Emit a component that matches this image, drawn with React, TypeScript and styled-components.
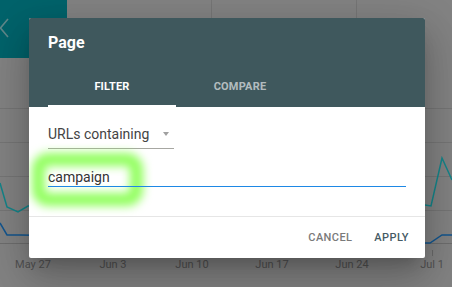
import React from 'react';
import styled, { createGlobalStyle } from 'styled-components';

const GlobalStyle = createGlobalStyle`
   html, body {
      margin: 0;
      padding: 0;
      background: #838383;
   }
   * {
      box-sizing: border-box;
   }
`;

const labels = [
   { x: 33, text: 'May 27' },
   { x: 113, text: 'Jun 3' },
   { x: 192, text: 'Jun 10' },
   { x: 272, text: 'Jun 17' },
   { x: 352, text: 'Jun 24' },
   { x: 432, text: 'Jul 1' },
];

const Chart = () => (
   <ChartSvg width="452" height="287" viewBox="0 0 452 287">
      <g stroke="#767676" strokeWidth="1">
         <line x1="211.5" y1="0" x2="211.5" y2="243" />
         <line x1="356.5" y1="0" x2="356.5" y2="243" />
         <line x1="0" y1="108.5" x2="452" y2="108.5" />
         <line x1="0" y1="142.5" x2="452" y2="142.5" />
         <line x1="0" y1="176.5" x2="452" y2="176.5" />
         <line x1="0" y1="210.5" x2="452" y2="210.5" />
         <line x1="0" y1="243.5" x2="452" y2="243.5" stroke="#6e6e6e" />
         <line x1="432.5" y1="250" x2="432.5" y2="256" stroke="#6a6a6a" />
      </g>
      <polyline
         points="0,183 7,207 18,212 28,206 200,200 425,205 431,206 442,158 452,180"
         fill="none"
         stroke="#14858a"
         strokeWidth="1.5"
      />
      <polyline
         points="0,223 7,235 20,235 200,238 425,243 430,243 442,235 452,235"
         fill="none"
         stroke="#13568f"
         strokeWidth="1.5"
      />
      {labels.map((l) => (
         <AxisLabel key={l.text} x={l.x} y={268} textAnchor="middle">
            {l.text}
         </AxisLabel>
      ))}
   </ChartSvg>
);

export default function App() {
   return (
      <Page>
         <GlobalStyle />
         <Backdrop>
            <Chart />
            <TopBar>
               <BackTab>
                  <svg width="10" height="20" viewBox="0 0 10 20">
                     <polyline points="8,1 0.5,10 8,19" fill="none" stroke="#5f8789" strokeWidth="1.6" />
                  </svg>
               </BackTab>
            </TopBar>
         </Backdrop>

         <Overlay>
            <Dialog>
               <Header>
                  <Title>Page</Title>
                  <Tabs>
                     <Tab $active>FILTER</Tab>
                     <Tab>COMPARE</Tab>
                  </Tabs>
               </Header>

               <Body>
                  <Glow />
                  <Select>
                     <SelectText>URLs containing</SelectText>
                     <Arrow />
                  </Select>
                  <InputField>
                     <TextInput defaultValue="campaign" readOnly />
                  </InputField>
               </Body>

               <Footer>
                  <FlatButton $color="#7a7a7a">CANCEL</FlatButton>
                  <FlatButton $color="#455a64">APPLY</FlatButton>
               </Footer>
            </Dialog>
         </Overlay>
      </Page>
   );
}

const Page = styled.div`
   position: relative;
   width: 452px;
   height: 287px;
   overflow: hidden;
   background: #838383;
   font-family: Roboto, 'Liberation Sans', Arial, sans-serif;
`;

const Backdrop = styled.div`
   position: relative;
   width: 100%;
   height: 100%;
`;

const ChartSvg = styled.svg`
   position: absolute;
   left: 0;
   top: 0;
`;

const AxisLabel = styled.text`
   font-family: Roboto, 'Liberation Sans', Arial, sans-serif;
   font-size: 11px;
   fill: #525252;
`;

const TopBar = styled.div`
   position: relative;
   display: flex;
`;

const BackTab = styled.div`
   width: 67px;
   height: 58px;
   background: #01636b;
   padding-top: 18px;
   display: flex;
   align-items: flex-start;
`;

const Overlay = styled.div`
   position: absolute;
   inset: 0;
   display: flex;
   align-items: flex-start;
   justify-content: flex-start;
   padding: 18px 0 0 29px;
`;

const Dialog = styled.div`
   width: 396px;
   height: 240px;
   background: #ffffff;
   border-radius: 2px;
   overflow: hidden;
   display: flex;
   flex-direction: column;
   box-shadow:
      0 11px 15px -7px rgba(0, 0, 0, 0.2),
      0 24px 38px 3px rgba(0, 0, 0, 0.14),
      0 9px 46px 8px rgba(0, 0, 0, 0.12);
`;

const Header = styled.div`
   background: #3f585d;
   height: 89px;
   padding: 14px 19px 0 19px;
`;

const Title = styled.h2`
   margin: 0;
   font-size: 16px;
   line-height: 21px;
   font-weight: 700;
   color: #ffffff;
`;

const Tabs = styled.div`
   display: flex;
   margin-top: 14px;
   height: 40px;
`;

const Tab = styled.div<{ $active?: boolean }>`
   width: 128px;
   height: 40px;
   display: flex;
   align-items: center;
   justify-content: center;
   font-size: 11px;
   font-weight: 700;
   letter-spacing: 0.2px;
   color: ${(p) => (p.$active ? '#ffffff' : 'rgba(255, 255, 255, 0.62)')};
   border-bottom: 2px solid ${(p) => (p.$active ? '#ffffff' : 'transparent')};
`;

const Body = styled.div`
   position: relative;
   height: 109px;
   padding: 13px 19px 0 19px;
   display: flex;
   flex-direction: column;
`;

const Glow = styled.div`
   position: absolute;
   left: 3px;
   top: 46px;
   width: 111px;
   height: 53px;
   border: 13px solid #90ff5c;
   border-radius: 16px;
   filter: blur(5px);
   pointer-events: none;
`;

const Select = styled.div`
   width: 126px;
   height: 29px;
   display: flex;
   align-items: center;
   justify-content: space-between;
   border-bottom: 1px solid #a7a7a2;
   padding-right: 5px;
`;

const SelectText = styled.span`
   font-size: 14px;
   color: #444444;
`;

const Arrow = styled.span`
   width: 0;
   height: 0;
   border-left: 3.5px solid transparent;
   border-right: 3.5px solid transparent;
   border-top: 4px solid #a0a0a0;
`;

const InputField = styled.div`
   position: relative;
   margin-top: 20px;
   width: 358px;
   height: 18px;
   border-bottom: 1px solid #1e88e5;
   display: flex;
   align-items: flex-start;
`;

const TextInput = styled.input`
   width: 100%;
   height: 16px;
   padding: 0;
   border: none;
   outline: none;
   background: transparent;
   font-family: Roboto, 'Liberation Sans', Arial, sans-serif;
   font-size: 14px;
   line-height: 16px;
   color: #333333;
`;

const Footer = styled.div`
   flex: 1;
   border-top: 1px solid #e6e6e6;
   display: flex;
   align-items: center;
   justify-content: flex-end;
   gap: 22px;
   padding: 0 16px 1px 0;
`;

const FlatButton = styled.span<{ $color: string }>`
   font-size: 11px;
   font-weight: 500;
   letter-spacing: 0.4px;
   color: ${(p) => p.$color};
`;
